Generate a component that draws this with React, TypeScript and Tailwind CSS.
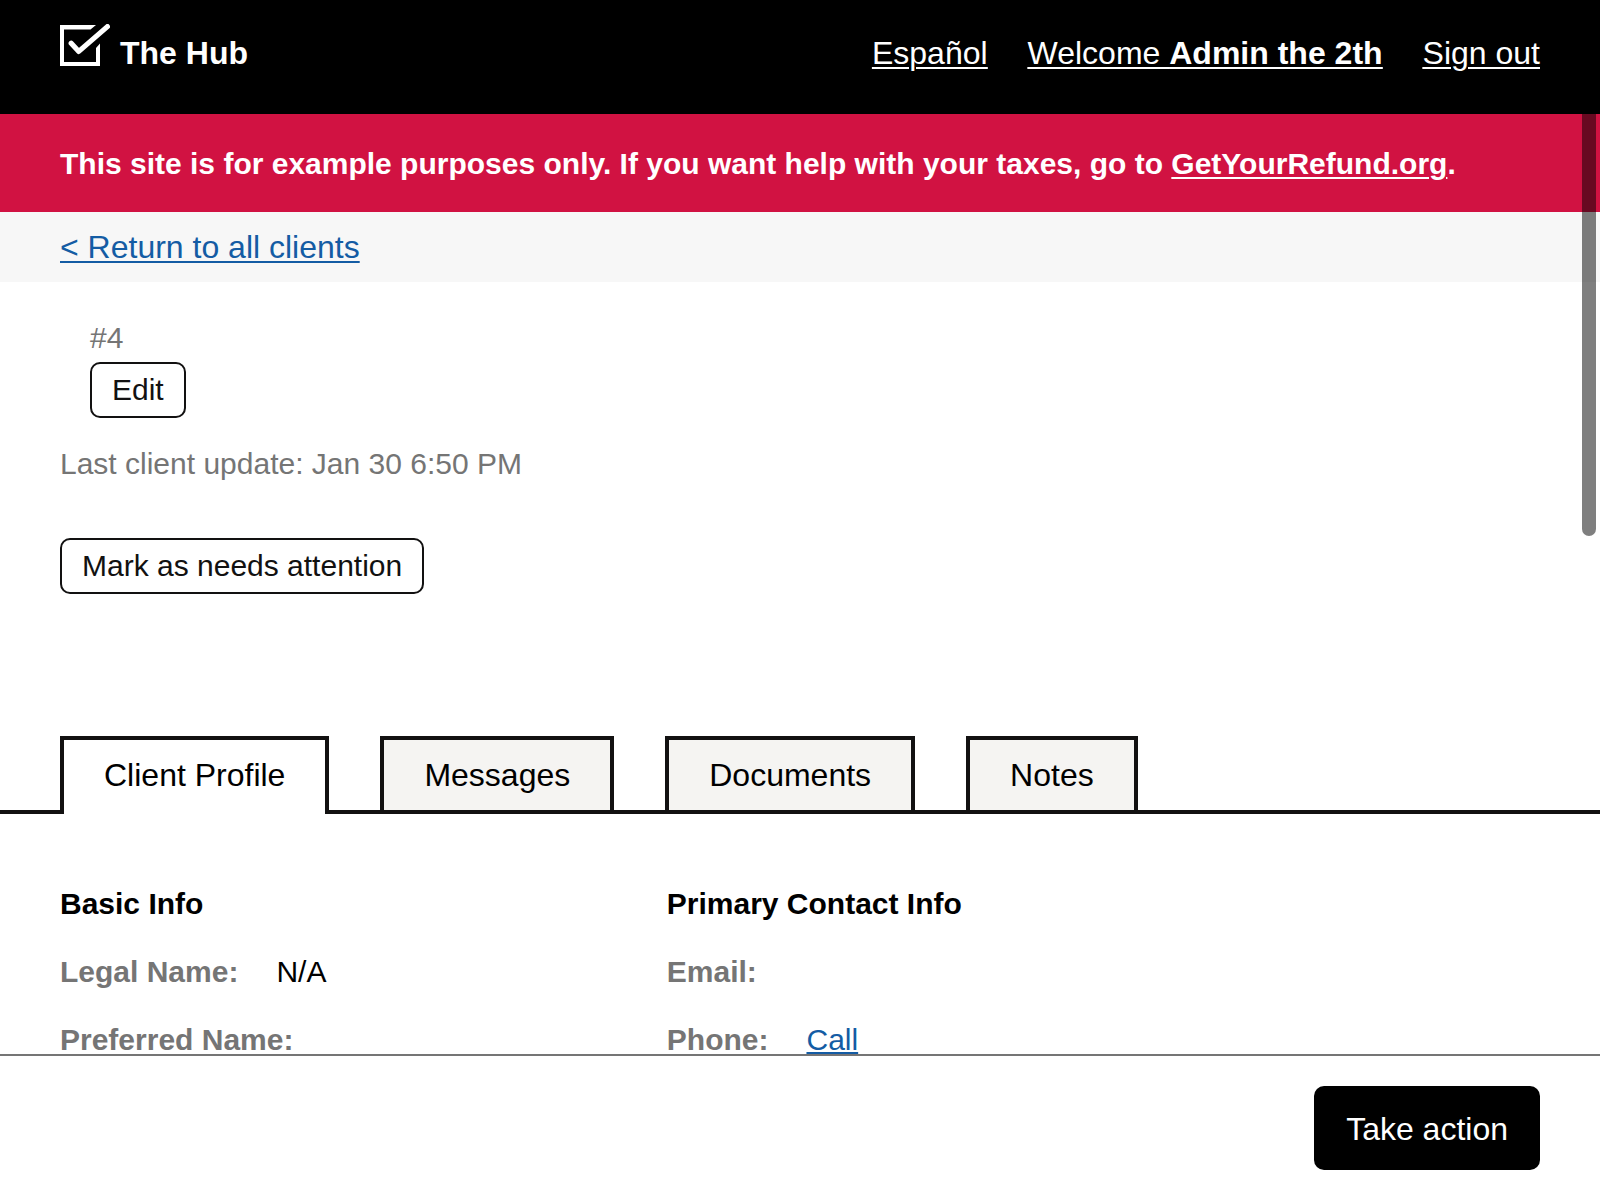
import React from "react";

function HubLogo() {
  return (
    <svg width="50" height="42" viewBox="0 0 50 42" fill="#fff" aria-hidden="true">
      <path d="M0 1H36L30.5 5.6H4V38H36V24L40 19.5V42H0Z" />
      <path
        d="M11.2 19.2L18.8 27.4L47.4 2.6"
        fill="none"
        stroke="#fff"
        strokeWidth="5.2"
        strokeLinecap="round"
        strokeLinejoin="round"
      />
    </svg>
  );
}

function Field({ label, children }: { label: string; children?: React.ReactNode }) {
  return (
    <div className="flex gap-[38px]">
      <dt className="font-bold text-[#757575]">{label}</dt>
      <dd>{children}</dd>
    </div>
  );
}

function InfoColumn({ title, children }: { title: string; children: React.ReactNode }) {
  return (
    <section className="flex flex-col gap-[26px]">
      <h2 className="font-bold">{title}</h2>
      <dl className="flex flex-col gap-[26px]">{children}</dl>
    </section>
  );
}

const outlineButton =
  "flex h-14 items-center rounded-[10px] border-2 border-[#121111] px-5 text-[#121111]";

const tabs = ["Client Profile", "Messages", "Documents", "Notes"];

export default function App() {
  return (
    <div className="flex h-screen flex-col bg-white font-['Liberation_Sans',Arial,sans-serif] text-[30px] leading-[42px] text-black">
      <header className="flex h-[114px] shrink-0 items-start justify-between bg-black px-[60px] text-[32px] leading-[48px] text-white">
        <a href="#home" className="flex items-start gap-[10px] font-bold">
          <span className="pt-6">
            <HubLogo />
          </span>
          <span className="pt-[29px]">The Hub</span>
        </a>
        <nav className="flex gap-10 pt-[29px] underline decoration-2 underline-offset-3">
          <a href="#es">Español</a>
          <a href="#profile">
            Welcome <strong>Admin the 2th</strong>
          </a>
          <a href="#signout">Sign out</a>
        </nav>
      </header>

      <div className="relative min-h-0 flex-1 overflow-hidden">
        <div className="bg-[#d11242] px-[60px] pt-[29px] pb-[27px] font-bold text-white">
          This site is for example purposes only. If you want help with your taxes, go to{" "}
          <a href="#refund" className="underline decoration-2 underline-offset-3">
            GetYourRefund.org
          </a>
          .
        </div>
        <div className="bg-[#f7f7f7] px-[60px] py-[11px] text-[32px] leading-[48px]">
          <a
            href="#clients"
            className="text-[#145ca4] underline decoration-2 underline-offset-3"
          >
            &lt; Return to all clients
          </a>
        </div>

        <main>
          <div className="flex flex-col items-start px-[60px] pt-[35px]">
            <div className="pl-[30px]">
              <p className="text-[#757575]">#4</p>
              <button type="button" className={`${outlineButton} mt-[3px]`}>
                Edit
              </button>
            </div>
            <p className="mt-[25px] text-[#757575]">Last client update: Jan 30 6:50 PM</p>
            <button type="button" className={`${outlineButton} mt-[53px]`}>
              Mark as needs attention
            </button>
          </div>

          <div
            role="tablist"
            className="mt-[142px] flex gap-[51px] border-b-4 border-[#121111] px-[60px] text-[32px] leading-[48px]"
          >
            {tabs.map((tab, i) => (
              <button
                key={tab}
                type="button"
                role="tab"
                aria-selected={i === 0}
                className={
                  i === 0
                    ? "-mb-1 border-4 border-b-0 border-[#121111] bg-white px-10 pt-[11px] pb-[15px]"
                    : "border-4 border-b-0 border-[#121111] bg-[#f5f4f2] px-10 py-[11px]"
                }
              >
                {tab}
              </button>
            ))}
          </div>

          <div className="grid grid-cols-[41%_1fr] px-[60px] pt-[69px]">
            <InfoColumn title="Basic Info">
              <Field label="Legal Name:">N/A</Field>
              <Field label="Preferred Name:" />
            </InfoColumn>
            <InfoColumn title="Primary Contact Info">
              <Field label="Email:" />
              <Field label="Phone:">
                <a
                  href="#call"
                  className="text-[#145ca4] underline decoration-2 underline-offset-2"
                >
                  Call
                </a>
              </Field>
            </InfoColumn>
          </div>
        </main>

        <div className="absolute top-0 right-1 h-[422px] w-3.5 rounded-b-full bg-black/50" />
      </div>

      <footer className="flex shrink-0 justify-end border-t-2 border-[#757575] bg-white px-[60px] py-[30px]">
        <button
          type="button"
          className="h-[84px] rounded-[10px] bg-black px-8 pt-0.5 text-[32px] leading-[48px] text-white"
        >
          Take action
        </button>
      </footer>
    </div>
  );
}
